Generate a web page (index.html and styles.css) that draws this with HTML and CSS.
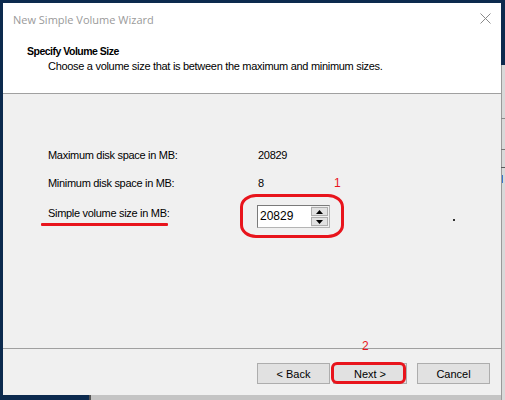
FILE: index.html
```html
<!DOCTYPE html>
<html>
<head>
<meta charset="utf-8">
<link rel="stylesheet" href="styles.css">
</head>
<body>
<div class="desktop">
  <div class="window">
    <div class="titlebar">
      <span class="title">New Simple Volume Wizard</span>
      <svg class="close" width="11" height="11" viewBox="0 0 11 11"><path d="M0.5 0.5L10.5 10.5M10.5 0.5L0.5 10.5" stroke="#8a8a8a" stroke-width="1" fill="none"/></svg>
    </div>
    <div class="header">
      <div class="h-title">Specify Volume Size</div>
      <div class="h-sub">Choose a volume size that is between the maximum and minimum sizes.</div>
    </div>
    <div class="body">
      <div class="row r1"><span class="label">Maximum disk space in MB:</span><span class="value">20829</span></div>
      <div class="row r2"><span class="label">Minimum disk space in MB:</span><span class="value">8</span></div>
      <div class="row r3">
        <span class="label lbl-size">Simple volume size in MB:</span>
        <div class="spin">
          <div class="spin-edit">20829</div>
          <div class="spin-btns">
            <div class="spin-btn"><svg width="7" height="4" viewBox="0 0 7 4"><polygon points="3.5,0 7,4 0,4" fill="#000"/></svg></div>
            <div class="spin-btn"><svg width="7" height="4" viewBox="0 0 7 4"><polygon points="0,0 7,0 3.5,4" fill="#000"/></svg></div>
          </div>
        </div>
      </div>
    </div>
    <div class="footer">
      <button class="btn">&lt; Back</button>
      <button class="btn next">Next &gt;</button>
      <button class="btn cancel">Cancel</button>
    </div>

    <div class="mark underline"></div>
    <div class="mark ring1"></div>
    <div class="mark ring2"></div>
    <div class="mark num1">1</div>
    <div class="mark num2">2</div>
    <div class="mark dot"></div>
  </div>
</div>
</body>
</html>
```
FILE: styles.css
```css
html, body {
  margin: 0;
  padding: 0;
}
.desktop {
  width: 505px;
  height: 400px;
  overflow: hidden;
  background:
    linear-gradient(#3a76cc, #3a76cc) 502px 175px / 1px 8px no-repeat,
    linear-gradient(#8a8a8a, #8a8a8a) 501px 118px / 4px 1px no-repeat,
    linear-gradient(#777, #777) 501px 149px / 4px 1px no-repeat,
    linear-gradient(#5a5a5a, #5a5a5a) 501px 167px / 4px 1px no-repeat,
    linear-gradient(to right, #9a9a9a 1px, #d9d9d9 1px) 501px 65px / 4px 335px no-repeat,
    linear-gradient(to right, #555 2px, #c4c4c4 2px) 89px 395px / 416px 5px no-repeat,
    #0c2a4e;
  padding: 3px 0 0 3px;
  box-sizing: border-box;
}
.window {
  position: relative;
  width: 498px;
  height: 392px;
  background: #f0f0f0;
  display: flex;
  flex-direction: column;
  font-family: "Liberation Sans", Arial, sans-serif;
  font-size: 11px;
  letter-spacing: -0.3px;
  color: #000;
}
.titlebar {
  height: 30px;
  background: #fff;
  display: flex;
  align-items: center;
  justify-content: space-between;
  padding: 0 10px 0 10px;
  box-sizing: border-box;
  letter-spacing: 0;
}
.title {
  font-family: "Open Sans", "Noto Sans", sans-serif;
  font-size: 11px;
  color: #9a9a9a;
  margin-top: 2px;
}
.close {
  display: block;
}
.header {
  height: 61px;
  box-sizing: border-box;
  background: #fff;
  border-bottom: 1px solid #a0a0a0;
  padding: 11px 0 0 24px;
}
.h-title {
  font-weight: bold;
  font-size: 10.5px;
  letter-spacing: -0.5px;
  line-height: 14px;
}
.h-sub {
  line-height: 14px;
  margin-top: 1px;
  padding-left: 21px;
}
.body {
  flex: 1;
  padding: 0 0 0 45px;
}
.row {
  display: flex;
  align-items: flex-start;
  line-height: 14px;
}
.label {
  width: 210px;
}
.r1 { margin-top: 54px; }
.r2 { margin-top: 14px; }
.r3 { margin-top: 15px; }
.r3 .label { padding-top: 1px; width: 209px; }
.spin {
  display: flex;
  width: 73px;
  height: 23px;
  box-sizing: border-box;
  border: 1px solid #7a7a7a;
  border-right-color: #b4b4b4;
  border-bottom-color: #b4b4b4;
  background: #fff;
}
.spin-edit {
  flex: 1;
  font-size: 12px;
  letter-spacing: 0;
  line-height: 21px;
  padding-left: 2px;
}
.spin-btns {
  width: 17px;
  display: flex;
  flex-direction: column;
  gap: 1px;
  padding: 1px 1px 1px 0;
  background: #f0f0f0;
}
.spin-btn {
  flex: 1;
  border: 1px solid #adadad;
  background: #e1e1e1;
  display: flex;
  align-items: center;
  justify-content: center;
}
.spin-btn svg { display: block; }
.footer {
  height: 47px;
  box-sizing: border-box;
  border-top: 1px solid #a0a0a0;
  display: flex;
  justify-content: flex-end;
  align-items: flex-start;
  padding: 14px 11px 0 0;
}
.btn {
  width: 73px;
  height: 21px;
  box-sizing: border-box;
  border: 1px solid #adadad;
  background: #e1e1e1;
  font-family: "Liberation Sans", Arial, sans-serif;
  font-size: 11px;
  color: #000;
  padding: 0;
  margin: 0;
}
.next { margin-left: 3px; width: 74px; }
.cancel { margin-left: 10px; }

.mark { position: absolute; }
.underline {
  left: 38px;
  top: 220px;
  width: 127px;
  height: 3px;
  background: #e8141c;
  border-radius: 1px;
}
.ring1 {
  left: 237px;
  top: 191px;
  width: 104px;
  height: 44px;
  box-sizing: border-box;
  border: 3px solid #e8141c;
  border-radius: 16px / 13px;
}
.ring2 {
  left: 328px;
  top: 359px;
  width: 75px;
  height: 22px;
  box-sizing: border-box;
  border: 3px solid #e8141c;
  border-radius: 6px;
}
.num1, .num2 {
  font-family: "Liberation Sans", Arial, sans-serif;
  font-size: 12px;
  line-height: 12px;
  letter-spacing: 0;
  color: #e8141c;
}
.num1 { left: 331px; top: 174px; }
.num2 { left: 359px; top: 337px; }
.dot {
  left: 450px;
  top: 216px;
  width: 2px;
  height: 2px;
  background: #333;
}
```
